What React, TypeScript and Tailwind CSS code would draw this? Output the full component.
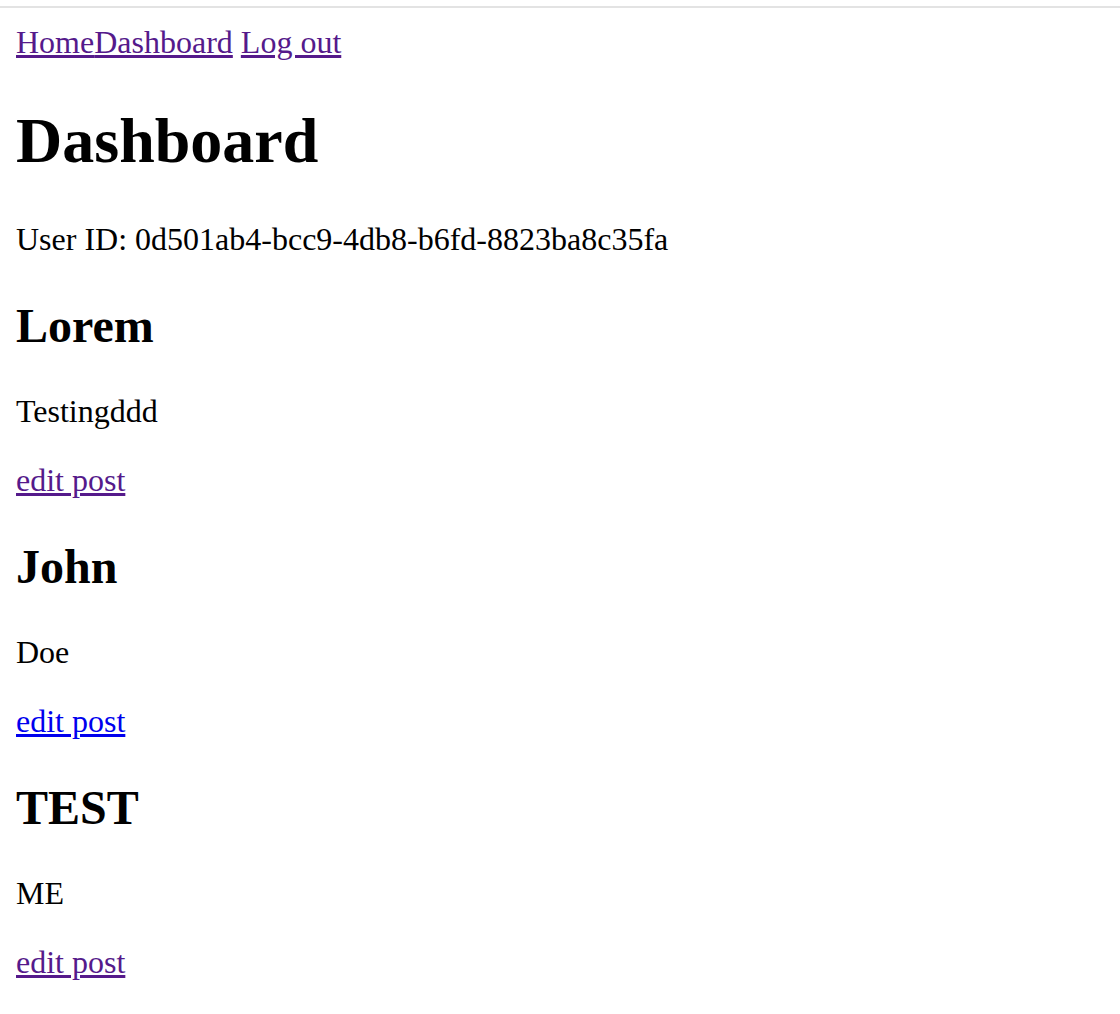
const posts = [
  { title: "Lorem", body: "Testingddd", visited: true },
  { title: "John", body: "Doe", visited: false },
  { title: "TEST", body: "ME", visited: true },
];

export default function App() {
  return (
    <div className="min-h-screen bg-white font-['Liberation_Serif',serif] text-[32px] leading-[normal] text-black">
      {/* top edge */}
      <div className="h-[6px]" />
      <div className="h-[2px] bg-[#e3e3e3]" />

      <div className="px-4 pt-4">
        {/* Nav */}
        <nav>
          <a href="#" className="text-[#551a8b] underline">Home</a>
          <a href="#" className="text-[#551a8b] underline">Dashboard</a>{" "}
          <a href="#" className="text-[#551a8b] underline">Log out</a>
        </nav>

        <h1 className="my-[43px] text-[64px] font-bold">Dashboard</h1>

        <p className="my-8">User ID: 0d501ab4-bcc9-4db8-b6fd-8823ba8c35fa</p>

        {posts.map((post) => (
          <div key={post.title}>
            <h2 className="my-[40px] text-[48px] font-bold">{post.title}</h2>
            <p className="my-8">{post.body}</p>
            <p className="my-8">
              <a
                href="#"
                className={post.visited ? "text-[#551a8b] underline" : "text-[#0000ee] underline"}
              >
                edit post
              </a>
            </p>
          </div>
        ))}
      </div>
    </div>
  );
}
